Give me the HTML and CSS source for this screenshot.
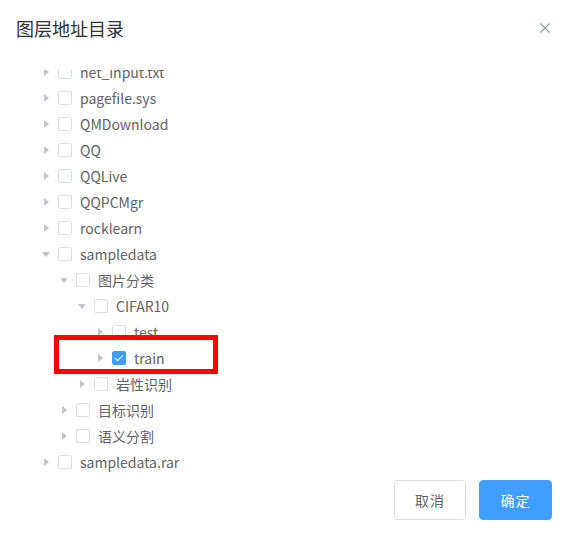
FILE: index.html
```html
<!DOCTYPE html>
<html lang="zh-CN">
<head>
    <meta charset="UTF-8">
    <meta name="viewport" content="width=device-width, initial-scale=1.0">
    <title>图层地址目录</title>
    <link rel="stylesheet" href="styles.css">
</head>
<body>
    <div class="dialog">
        <div class="dialog-header">
            <span class="dialog-title">图层地址目录</span>
            <button class="dialog-close" aria-label="close">
                <svg width="10" height="10" viewBox="0 0 10 10"><path d="M0.5 0.5 L9.5 9.5 M9.5 0.5 L0.5 9.5" stroke="#909399" stroke-width="1.1" fill="none"/></svg>
            </button>
        </div>

        <div class="tree-view">
            <div class="tree">
                <div class="node lv1"><i class="caret"></i><span class="check"></span><span class="label">net_input.txt</span></div>
                <div class="node lv1"><i class="caret"></i><span class="check"></span><span class="label">pagefile.sys</span></div>
                <div class="node lv1"><i class="caret"></i><span class="check"></span><span class="label">QMDownload</span></div>
                <div class="node lv1"><i class="caret"></i><span class="check"></span><span class="label">QQ</span></div>
                <div class="node lv1"><i class="caret"></i><span class="check"></span><span class="label">QQLive</span></div>
                <div class="node lv1"><i class="caret"></i><span class="check"></span><span class="label">QQPCMgr</span></div>
                <div class="node lv1"><i class="caret"></i><span class="check"></span><span class="label">rocklearn</span></div>
                <div class="node lv1"><i class="caret open"></i><span class="check"></span><span class="label">sampledata</span></div>
                <div class="node lv2"><i class="caret open"></i><span class="check"></span><span class="label">图片分类</span></div>
                <div class="node lv3"><i class="caret open"></i><span class="check"></span><span class="label">CIFAR10</span></div>
                <div class="node lv4"><i class="caret"></i><span class="check"></span><span class="label">test</span></div>
                <div class="node lv4"><i class="caret"></i><span class="check checked"></span><span class="label">train</span><span class="mark"></span></div>
                <div class="node lv3"><i class="caret"></i><span class="check"></span><span class="label">岩性识别</span></div>
                <div class="node lv2"><i class="caret"></i><span class="check"></span><span class="label">目标识别</span></div>
                <div class="node lv2"><i class="caret"></i><span class="check"></span><span class="label">语义分割</span></div>
                <div class="node lv1"><i class="caret"></i><span class="check"></span><span class="label">sampledata.rar</span></div>
            </div>
        </div>

        <div class="dialog-footer">
            <button class="btn">取消</button>
            <button class="btn btn-primary">确定</button>
        </div>
    </div>
</body>
</html>
```

FILE: styles.css
```css
* {
    margin: 0;
    padding: 0;
    box-sizing: border-box;
}

body {
    background-color: #fff;
    font-family: "Noto Sans CJK SC", "Noto Sans", sans-serif;
    color: #606266;
}

.dialog {
    width: 570px;
    height: 538px;
    background-color: #fff;
}

.dialog-header {
    display: flex;
    justify-content: space-between;
    align-items: center;
    padding: 16px 20px 0 16px;
    height: 40px;
}

.dialog-title {
    font-size: 18px;
    line-height: 24px;
    color: #303133;
}

.dialog-close {
    border: none;
    background: none;
    width: 10px;
    height: 10px;
    display: flex;
}

.tree-view {
    margin-top: 30px;
    height: 406px;
    overflow: hidden;
}

/* list is scrolled a little, first row is cut */
.tree {
    margin-top: -11px;
}

.node {
    position: relative;
    display: flex;
    align-items: center;
    height: 26px;
    font-size: 14px;
}

.lv1 { padding-left: 38px; }
.lv2 { padding-left: 56px; }
.lv3 { padding-left: 74px; }
.lv4 { padding-left: 92px; }

.caret {
    width: 16px;
    height: 26px;
    display: flex;
    align-items: center;
    justify-content: center;
}

.caret::before {
    content: "";
    border-left: 5px solid #c0c4cc;
    border-top: 4px solid transparent;
    border-bottom: 4px solid transparent;
}

.caret.open::before {
    border-top: 5px solid #c0c4cc;
    border-left: 4px solid transparent;
    border-right: 4px solid transparent;
    border-bottom: none;
}

.check {
    position: relative;
    width: 14px;
    height: 14px;
    margin-left: 4px;
    margin-right: 8px;
    border: 1px solid #dcdfe6;
    border-radius: 2px;
    background-color: #fff;
}

.check.checked {
    background-color: #409eff;
    border-color: #409eff;
}

.check.checked::after {
    content: "";
    position: absolute;
    left: 4px;
    top: 1px;
    width: 3px;
    height: 7px;
    border: 1px solid #fff;
    border-top: none;
    border-left: none;
    transform: rotate(45deg);
}

.label {
    line-height: 26px;
    color: #606266;
}

/* red highlight drawn over the train row */
.mark {
    position: absolute;
    left: 54px;
    top: -10px;
    width: 164px;
    height: 39px;
    border: 5px solid #ff0000;
}

.dialog-footer {
    display: flex;
    justify-content: flex-end;
    gap: 13px;
    padding: 4px 18px 0 0;
}

.btn {
    font-family: inherit;
    font-size: 14px;
    height: 40px;
    width: 72px;
    border: 1px solid #dcdfe6;
    border-radius: 4px;
    background-color: #fff;
    color: #606266;
    letter-spacing: 1px;
}

.btn-primary {
    width: 73px;
    background-color: #409eff;
    border-color: #409eff;
    color: #fff;
}
```
